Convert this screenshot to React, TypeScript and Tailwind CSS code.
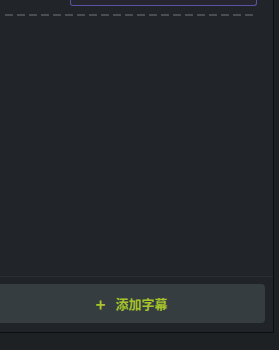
export default function App() {
  return (
    <div className="w-[279px] h-[350px] bg-[#1e2124] overflow-hidden flex flex-col" style={{ fontFamily: '"Noto Sans CJK SC", "Noto Sans", sans-serif' }}>
      <div className="w-[274px] h-[333px] bg-[#212428] border-r border-b border-[#0d0e10] flex flex-col">
        <div className="ml-[70px] w-[187px] h-[6px] bg-[#25262f] border border-t-0 border-[#5b52a3] rounded-b-[3px]" />
        <div className="mt-[8px] ml-[5px] w-[252px] h-[2px] bg-[repeating-linear-gradient(90deg,#4a4e53_0_8px,transparent_8px_12px)]" />
        <div className="flex-1" />
        <div className="border-t border-[#2a2d31] bg-[#202327] pt-[7px] pb-[9px] pr-[8px]">
          <button className="w-[265px] h-[39px] bg-[#353d40] rounded-r-[4px] flex items-center justify-center gap-[10px] text-[#a6c32b] text-[13px] font-bold">
            <span className="text-[17px] font-bold leading-none -ml-[2px]">+</span>
            <span>添加字幕</span>
          </button>
        </div>
      </div>
    </div>
  )
}
